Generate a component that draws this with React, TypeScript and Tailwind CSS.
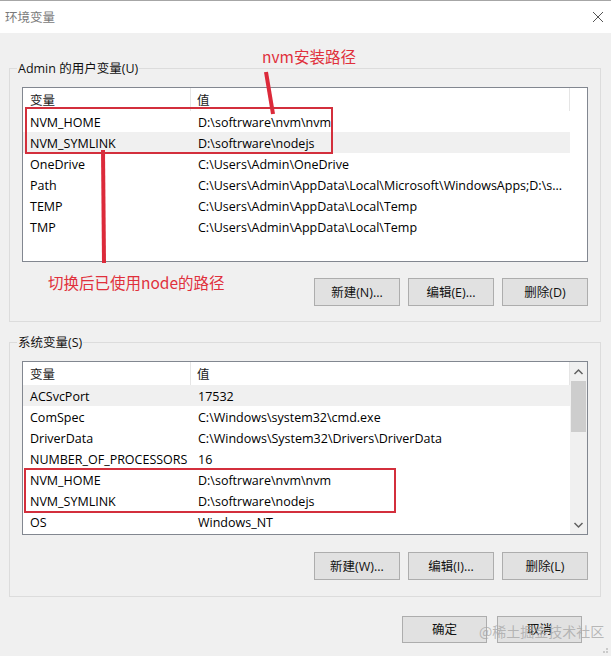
import React from "react";

type Row = { name: string; value: string };

const userVars: Row[] = [
  { name: "NVM_HOME", value: "D:\\softrware\\nvm\\nvm" },
  { name: "NVM_SYMLINK", value: "D:\\softrware\\nodejs" },
  { name: "OneDrive", value: "C:\\Users\\Admin\\OneDrive" },
  { name: "Path", value: "C:\\Users\\Admin\\AppData\\Local\\Microsoft\\WindowsApps;D:\\s..." },
  { name: "TEMP", value: "C:\\Users\\Admin\\AppData\\Local\\Temp" },
  { name: "TMP", value: "C:\\Users\\Admin\\AppData\\Local\\Temp" },
];

const sysVars: Row[] = [
  { name: "ACSvcPort", value: "17532" },
  { name: "ComSpec", value: "C:\\Windows\\system32\\cmd.exe" },
  { name: "DriverData", value: "C:\\Windows\\System32\\Drivers\\DriverData" },
  { name: "NUMBER_OF_PROCESSORS", value: "16" },
  { name: "NVM_HOME", value: "D:\\softrware\\nvm\\nvm" },
  { name: "NVM_SYMLINK", value: "D:\\softrware\\nodejs" },
  { name: "OS", value: "Windows_NT" },
];

const WinButton = ({ label, className = "" }: { label: string; className?: string }) => (
  <button className={`h-[28px] w-[86px] pt-[2px] bg-[#e1e1e1] border border-[#adadad] text-[12.5px] text-[#111] flex items-center justify-center ${className}`}>
    {label}
  </button>
);

const VarList = ({ rows, selected, scroll, height }: { rows: Row[]; selected: number; scroll?: boolean; height: string }) => (
  <div className={`${height} w-[566px] border border-[#828790] bg-white flex overflow-hidden`}>
    <div className="w-[547px] flex flex-col">
      {/* header */}
      <div className="h-[23px] flex items-center text-[12.5px] text-[#1a1a1a] shrink-0">
        <div className="w-[168px] shrink-0 h-full pl-[7px] pt-[4px] flex items-center border-r border-[#e5e5e5]">变量</div>
        <div className="flex-1 h-full pl-[6px] pt-[4px] flex items-center border-r border-[#e5e5e5]">值</div>
      </div>
      {rows.map((r, i) => (
        <div key={i} className={`h-[21px] pt-[4px] flex items-center text-[12.5px] text-black shrink-0 ${i === selected ? "bg-[#f0f0f0]" : ""}`}>
          <div className="w-[168px] shrink-0 pl-[7px] whitespace-nowrap">{r.name}</div>
          <div className="flex-1 min-w-0 overflow-hidden pl-[7px] whitespace-nowrap">{r.value}</div>
        </div>
      ))}
    </div>
    {scroll ? (
      <div className="w-[17px] bg-[#f0f0f0] flex flex-col items-center">
        <svg width="17" height="17" viewBox="0 0 17 17" className="mt-[2px]">
          <path d="M4.5 10 L8.5 6 L12.5 10" fill="none" stroke="#606060" strokeWidth="1.5" />
        </svg>
        <div className="w-[15px] h-[51px] bg-[#cdcdcd]" />
        <div className="flex-1" />
        <svg width="17" height="17" viewBox="0 0 17 17" className="mb-[1px]">
          <path d="M4.5 7 L8.5 11 L12.5 7" fill="none" stroke="#606060" strokeWidth="1.5" />
        </svg>
      </div>
    ) : (
      <div className="w-[17px]" />
    )}
  </div>
);

export default function App() {
  return (
    <div
      className="relative w-[611px] h-[656px] bg-[#f0f0f0] overflow-hidden"
      style={{ fontFamily: '"Open Sans", "Noto Sans CJK SC", sans-serif' }}
    >
      {/* title bar */}
      <div className="h-[33px] bg-white border-t border-[#a6a6a6] flex items-center justify-between pl-[5px] pr-[7px]">
        <span className="text-[12.5px] text-[#7a7a7a] pt-[3px]">环境变量</span>
        <svg width="12" height="12" viewBox="0 0 12 12">
          <path d="M1 1 L11 11 M11 1 L1 11" stroke="#555" strokeWidth="1" />
        </svg>
      </div>

      <div className="pl-[9px] pr-[10px]">
        <fieldset className="mt-[27px] border border-[#dcdcdc] px-[12px] pt-[11px] pb-[15px]">
          <legend className="-ml-[5px] px-[1px] pt-[2px] text-[12.5px] leading-[14px] text-[#111]">Admin 的用户变量(U)</legend>
          <VarList rows={userVars} selected={1} height="h-[175px]" />
          <div className="flex justify-end gap-[8px] mt-[16px] w-[566px]">
            <WinButton label="新建(N)..." />
            <WinButton label="编辑(E)..." />
            <WinButton label="删除(D)" />
          </div>
        </fieldset>

        <fieldset className="mt-[12px] border border-[#dcdcdc] px-[12px] pt-[11px] pb-[16px]">
          <legend className="-ml-[5px] px-[1px] pt-[2px] text-[12.5px] leading-[14px] text-[#111]">系统变量(S)</legend>
          <VarList rows={sysVars} selected={0} scroll height="h-[174px]" />
          <div className="flex justify-end gap-[8px] mt-[17px] w-[566px]">
            <WinButton label="新建(W)..." />
            <WinButton label="编辑(I)..." />
            <WinButton label="删除(L)" />
          </div>
        </fieldset>
      </div>

      <div className="flex justify-end gap-[10px] pr-[29px] mt-[19px]">
        <WinButton label="确定" className="!h-[27px] !w-[85px]" />
        <WinButton label="取消" className="!h-[27px] !w-[85px]" />
      </div>

      {/* annotations */}
      <svg className="absolute left-0 top-0 pointer-events-none" width="611" height="656">
        <line x1="266" y1="72" x2="273" y2="114" stroke="#dc2a3a" strokeWidth="4" />
        <line x1="103" y1="150" x2="104" y2="263" stroke="#dc2a3a" strokeWidth="4" />
        <circle cx="604" cy="652" r="0.8" fill="#9a9a9a" />
        <circle cx="607" cy="649" r="0.8" fill="#9a9a9a" />
        <circle cx="607" cy="652" r="0.8" fill="#9a9a9a" />
      </svg>
      <div className="absolute left-[25px] top-[107px] w-[308px] h-[47px] border-2 border-[#d32f3c]" />
      <div className="absolute left-[24px] top-[468px] w-[372px] h-[45px] border-2 border-[#d32f3c]" />
      <span className="absolute left-[262px] top-[46px] text-[15.5px] leading-[20px] text-[#e0303c] whitespace-nowrap" style={{ fontFamily: '"Noto Sans CJK SC", sans-serif' }}>nvm安装路径</span>
      <span className="absolute left-[48px] top-[272px] text-[15.5px] leading-[20px] text-[#e0303c] whitespace-nowrap" style={{ fontFamily: '"Noto Sans CJK SC", sans-serif' }}>切换后已使用node的路径</span>
      <span className="absolute left-[479px] top-[622px] text-[14px] leading-[18px] text-[#a8a8a8]/80 whitespace-nowrap" style={{ fontFamily: '"Noto Sans CJK SC", sans-serif' }}>@稀土掘金技术社区</span>
    </div>
  );
}
